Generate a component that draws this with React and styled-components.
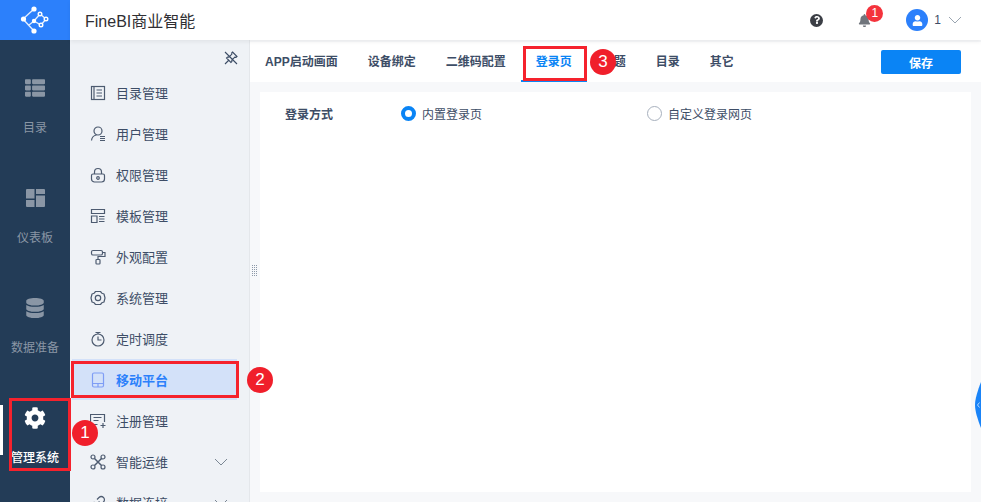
import React from 'react'
import styled, { createGlobalStyle } from 'styled-components'
import { FaUser, FaBell, FaQuestion, FaCog, FaDatabase, FaThList } from 'react-icons/fa'

const FONT = '"Liberation Sans", "Noto Sans CJK SC", sans-serif'

const GlobalStyle = createGlobalStyle`
  html, body {
    margin: 0;
    height: 100%;
    overflow: hidden;
    font-family: ${FONT};
  }
  * { box-sizing: border-box; }
`

const Page = styled.div`
  position: relative;
  width: 981px;
  height: 502px;
  overflow: hidden;
  display: grid;
  grid-template-columns: 70px 1fr;
  grid-template-rows: 40px 1fr;
  background: #f7f8fa;
`

/* top bar */
const LogoBox = styled.div`
  background: #2c80fb;
  display: flex;
  align-items: center;
  justify-content: center;
`
const TopBar = styled.header`
  background: #fff;
  display: flex;
  align-items: center;
  padding-left: 15px;
  box-shadow: 0 2px 4px rgba(0, 0, 0, 0.06);
  z-index: 2;
`
const Title = styled.div`
  font-size: 16px;
  color: #2f2f33;
  flex: 1;
`
const TopTools = styled.div`
  display: flex;
  align-items: center;
  padding-right: 19px;
`
const HelpDot = styled.span`
  width: 13px;
  height: 13px;
  border-radius: 50%;
  background: #3b3e45;
  color: #fff;
  display: flex;
  align-items: center;
  justify-content: center;
  font-size: 8px;
  margin-right: 35px;
`
const BellWrap = styled.span`
  position: relative;
  display: flex;
  color: #70757c;
  font-size: 13px;
  margin-right: 35px;
`
const Badge = styled.span`
  position: absolute;
  left: 8px;
  top: -9px;
  width: 17px;
  height: 17px;
  border-radius: 50%;
  background: #f4333c;
  color: #fff;
  font-size: 12px;
  line-height: 16px;
  text-align: center;
`
const Avatar = styled.span`
  width: 22px;
  height: 22px;
  border-radius: 50%;
  background: #2c80fb;
  color: #fff;
  display: flex;
  align-items: center;
  justify-content: center;
  font-size: 11px;
  margin-right: 6px;
`
const UserName = styled.span`
  font-size: 12px;
  color: #3d4d66;
  margin-right: 7px;
`

/* main left rail */
const Rail = styled.nav`
  background: #233c57;
  display: flex;
  flex-direction: column;
  overflow: hidden;
`
const RailItem = styled.div`
  position: relative;
  height: 110px;
  flex: none;
  display: flex;
  flex-direction: column;
  align-items: center;
  padding-top: 37px;
  color: ${p => (p.$active ? '#fff' : '#8a96a5')};
  font-size: 12px;
  font-weight: ${p => (p.$active ? 500 : 400)};
  &::before {
    content: '';
    display: ${p => (p.$active ? 'block' : 'none')};
    position: absolute;
    left: 0;
    top: 35px;
    width: 3px;
    height: 50px;
    background: #fff;
  }
`
const RailIcon = styled.span`
  height: 22px;
  display: flex;
  align-items: center;
  justify-content: center;
  font-size: ${p => p.$size || 20}px;
  margin-bottom: 21px;
`
const RailLabel = styled.span`
  line-height: 16px;
  white-space: nowrap;
`

/* body = second menu + content */
const Body = styled.div`
  display: grid;
  grid-template-columns: 180px 1fr;
  min-height: 0;
`
const Menu = styled.aside`
  background: #eff2f6;
  border-right: 1px solid #e4e7eb;
  overflow: hidden;
  display: flex;
  flex-direction: column;
`
const PinRow = styled.div`
  height: 32px;
  flex: none;
  display: flex;
  align-items: center;
  justify-content: flex-end;
  padding: 4px 11px 0 0;
  color: #3d4d66;
`
const MenuList = styled.div`
  display: flex;
  flex-direction: column;
  padding-left: 2px;
`
const MenuItem = styled.div`
  height: 41px;
  flex: none;
  display: flex;
  align-items: center;
  width: 165px;
  padding-left: 18px;
  font-size: 13px;
  color: ${p => (p.$active ? '#2c80fb' : '#3d4d66')};
  font-weight: ${p => (p.$active ? 700 : 400)};
  background: ${p => (p.$active ? '#d3e1f9' : 'transparent')};
`
const MenuIcon = styled.svg`
  width: 16px;
  height: 16px;
  margin-right: 10px;
  flex: none;
  fill: none;
  stroke: ${p => (p.$active ? '#7f9df5' : '#4d5b70')};
  stroke-width: 1.2;
`
const MenuText = styled.span`
  flex: 1;
`
const Chevron = styled.svg`
  width: 14px;
  height: 8px;
  fill: none;
  stroke: ${p => p.$color || '#7b8794'};
  stroke-width: 1;
  margin-right: ${p => p.$gap || 0}px;
`

const Content = styled.main`
  position: relative;
  display: flex;
  flex-direction: column;
  min-width: 0;
`
const TabBar = styled.div`
  flex: none;
  height: 40px;
  margin-top: 2px;
  background: #fff;
  display: flex;
  align-items: stretch;
  justify-content: space-between;
  padding-right: 20px;
`
const Tabs = styled.div`
  display: flex;
`
const Tab = styled.div`
  padding: 2px 15px 0;
  font-size: 12px;
  font-weight: 700;
  line-height: 36px;
  color: ${p => (p.$active ? '#0a84f5' : '#3d4d66')};
  border-bottom: 2px solid ${p => (p.$active ? '#0a84f5' : 'transparent')};
`
const SaveButton = styled.button`
  align-self: center;
  width: 80px;
  height: 24px;
  border: 0;
  border-radius: 2px;
  background: #0a84f5;
  color: #fff;
  font: 700 12px ${FONT};
`
const Panel = styled.section`
  flex: 1;
  margin: 10px;
  background: #fff;
  padding: 10px 25px;
`
const FormRow = styled.div`
  display: flex;
  align-items: center;
  height: 22px;
  font-size: 12px;
  color: #3d4d66;
`
const FormLabel = styled.div`
  width: 116px;
  font-weight: 700;
`
const RadioOption = styled.label`
  width: 246px;
  display: flex;
  align-items: center;
  gap: 6px;
`
const RadioMark = styled.span`
  width: 15px;
  height: 15px;
  border-radius: 50%;
  background: #fff;
  border: ${p => (p.$checked ? '4px solid #0a84f5' : '1px solid #a7b0bd')};
`

/* things lying over the page */
const RedBox = styled.div`
  position: absolute;
  left: ${p => p.$x}px;
  top: ${p => p.$y}px;
  width: ${p => p.$w}px;
  height: ${p => p.$h}px;
  border: 3px solid #f5222d;
  z-index: 5;
`
const Step = styled.div`
  position: absolute;
  left: ${p => p.$x}px;
  top: ${p => p.$y}px;
  width: 26px;
  height: 26px;
  border-radius: 50%;
  background: #f01f2b;
  color: #fff;
  font-size: 17px;
  line-height: 26px;
  text-align: center;
  z-index: 6;
`
const SideBubble = styled.svg`
  position: absolute;
  right: 0;
  top: 382px;
  width: 6px;
  height: 46px;
  z-index: 4;
`
const GripDots = styled.svg`
  position: absolute;
  left: 2px;
  top: 224px;
  width: 6px;
  height: 13px;
  fill: #8c98a8;
`

const ICONS = {
  catalog: <><rect x="1.500" y="1.500" width="13" height="13" /><path d="M4 1.500v13M6.500 5H12M6.500 8H12M6.500 11H12" /></>,
  user: <><circle cx="8" cy="5" r="4" /><path d="M1.500 14.500c.3-2.800 2.200-5 5-5.500M10 10.500h5M10 12.500h5M10 14.500h5" /></>,
  lock: <><path d="M3 7h10a1.500 1.500 0 0 1 1.500 1.500V12a3 3 0 0 1-3 3h-7a3 3 0 0 1-3-3V8.500A1.500 1.500 0 0 1 3 7z" /><path d="M4.500 7V5a3.500 3.500 0 0 1 7 0v2" /><circle cx="8" cy="11" r="1.300" /></>,
  template: <><path d="M1.500 1.500h13v4h-13zM1.500 8h5.500v6.500H1.500zM9 8.500h5.500M9 11h5.500M9 13.500h5.500" /></>,
  paint: <><rect x="1.500" y="1.500" width="11" height="4.500" rx="1.500" /><path d="M12.500 3.500H15v4H8v3" /><rect x="6" y="10.500" width="4" height="4.500" rx="0.800" /></>,
  system: <><path d="M5.500 1.500h5l1.500 1.800 2 .7 1 4-1 4-2 .7-1.500 1.800h-5L4 12.700l-2-.7-1-4 1-4 2-.7z" strokeLinejoin="round" /><circle cx="8" cy="8" r="2.700" /></>,
  timer: <><circle cx="8" cy="9" r="6" /><path d="M5.500 1.500h5M8 1.500V3M8 5.500V9h3.500" /></>,
  mobile: <><rect x="2.500" y="1" width="11" height="14" rx="1.500" /><path d="M2.500 11.500h11M8 11.500V15" /></>,
  register: <><path d="M14.500 9V1.500h-14v10h7" /><path d="M3.500 4.500h8M3.500 7.500h5M10.500 12.500h5M13 10v5" /></>,
  ops: <><circle cx="3" cy="3" r="2" /><circle cx="13" cy="3" r="2" /><circle cx="3" cy="13" r="2" /><circle cx="13" cy="13" r="2" /><path d="M4.500 4.500l7 7M11.500 4.500l-7 7" strokeWidth="1.500" /></>,
  link: <><path d="M6.500 9.500l3-3M7 4.500l2-2a3 3 0 0 1 4.500 4.500l-2 2M9 11.500l-2 2A3 3 0 0 1 2.500 9l2-2" /></>,
}

const MENU = [
  ['catalog', '目录管理'],
  ['user', '用户管理'],
  ['lock', '权限管理'],
  ['template', '模板管理'],
  ['paint', '外观配置'],
  ['system', '系统管理'],
  ['timer', '定时调度'],
  ['mobile', '移动平台', 'active'],
  ['register', '注册管理'],
  ['ops', '智能运维', 'more'],
  ['link', '数据连接', 'more'],
]

const TABS = ['APP启动画面', '设备绑定', '二维码配置', '登录页', '主题', '目录', '其它']

const Logo = () => (
  <svg width="30" height="30" viewBox="0 0 30 30" fill="none" stroke="#fff" strokeWidth="1.4">
    <path d="M14 4L3 14l11 12M9 20l5-4 7 4 5-6-6-5-6 7" strokeOpacity="0.85" />
    <circle cx="14" cy="4" r="2.600" fill="#fff" stroke="none" />
    <circle cx="3.500" cy="14" r="2.600" fill="#fff" stroke="none" />
    <circle cx="14" cy="26" r="2.600" fill="#fff" stroke="none" />
    <circle cx="14" cy="16" r="2.200" fill="#fff" stroke="none" />
    <circle cx="20" cy="9" r="1.800" fill="#2c80fb" />
    <circle cx="26" cy="14" r="1.800" fill="#2c80fb" />
    <circle cx="21" cy="20" r="1.800" fill="#2c80fb" />
  </svg>
)

const DashboardIcon = () => (
  <svg width="19" height="18" viewBox="0 0 19 18" fill="#8a96a5">
    <path d="M0 1a1 1 0 0 1 1-1h7.500v9.500H0zM10 0h8a1 1 0 0 1 1 1v4h-9zM10 6.500h9V17a1 1 0 0 1-1 1h-8zM0 11h8.500v7H1a1 1 0 0 1-1-1z" />
  </svg>
)

const App = () => {
  return (
    <Page>
      <GlobalStyle />
      <LogoBox><Logo /></LogoBox>
      <TopBar>
        <Title>FineBI商业智能</Title>
        <TopTools>
          <HelpDot><FaQuestion /></HelpDot>
          <BellWrap><FaBell /><Badge>1</Badge></BellWrap>
          <Avatar><FaUser /></Avatar>
          <UserName>1</UserName>
          <Chevron viewBox="0 0 14 8" $color="#9aa5b1"><path d="M1 1l6 6 6-6" /></Chevron>
        </TopTools>
      </TopBar>

      <Rail>
        <RailItem><RailIcon><FaThList /></RailIcon><RailLabel>目录</RailLabel></RailItem>
        <RailItem><RailIcon><DashboardIcon /></RailIcon><RailLabel>仪表板</RailLabel></RailItem>
        <RailItem><RailIcon><FaDatabase /></RailIcon><RailLabel>数据准备</RailLabel></RailItem>
        <RailItem $active><RailIcon $size={22}><FaCog /></RailIcon><RailLabel>管理系统</RailLabel></RailItem>
      </Rail>

      <Body>
        <Menu>
          <PinRow>
            <svg width="14" height="14" viewBox="0 0 14 14" fill="none" stroke="currentColor" strokeWidth="1.100">
              <path d="M8.500 1L13 5.500l-1 .8-1.200-.2-3 3 .1 1.400-1 1L2.500 7l1-1 1.400.1 3-3-.2-1.200zM5 9l-4 4M1 1l12 12" />
            </svg>
          </PinRow>
          <MenuList>
            {MENU.map(([icon, text, kind]) => (
              <MenuItem key={text} $active={kind === 'active'}>
                <MenuIcon viewBox="0 0 16 16" $active={kind === 'active'}>{ICONS[icon]}</MenuIcon>
                <MenuText>{text}</MenuText>
                {kind === 'more' && (
                  <Chevron viewBox="0 0 14 8" $gap={9}><path d="M1 1l6 6 6-6" /></Chevron>
                )}
              </MenuItem>
            ))}
          </MenuList>
        </Menu>

        <Content>
          <GripDots viewBox="0 0 6 13">
            {[0, 1, 2, 3, 4, 5].map(i => (
              <React.Fragment key={i}>
                <rect x="0" y={i * 2 + 1} width="1" height="1" />
                <rect x="2" y={i * 2 + 1} width="1" height="1" />
                <rect x="4" y={i * 2 + 1} width="1" height="1" />
              </React.Fragment>
            ))}
          </GripDots>
          <TabBar>
            <Tabs>
              {TABS.map(t => <Tab key={t} $active={t === '登录页'}>{t}</Tab>)}
            </Tabs>
            <SaveButton>保存</SaveButton>
          </TabBar>
          <Panel>
            <FormRow>
              <FormLabel>登录方式</FormLabel>
              <RadioOption><RadioMark $checked />内置登录页</RadioOption>
              <RadioOption><RadioMark />自定义登录网页</RadioOption>
            </FormRow>
          </Panel>
        </Content>
      </Body>

      <RedBox $x={9} $y={398} $w={62} $h={73} />
      <RedBox $x={71} $y={361} $w={168} $h={37} />
      <RedBox $x={523} $y={46} $w={64} $h={35} />
      <Step $x={72} $y={420}>1</Step>
      <Step $x={247} $y={367}>2</Step>
      <Step $x={590} $y={49}>3</Step>
      <SideBubble viewBox="0 0 6 46">
        <path d="M6 0C2.500 9 0 17 0 23s2.500 14 6 23z" fill="#1a84f8" />
        <path d="M4.500 20.500L2.500 23l2 2.500" fill="none" stroke="#b9dafc" />
      </SideBubble>
    </Page>
  )
}

export default App
